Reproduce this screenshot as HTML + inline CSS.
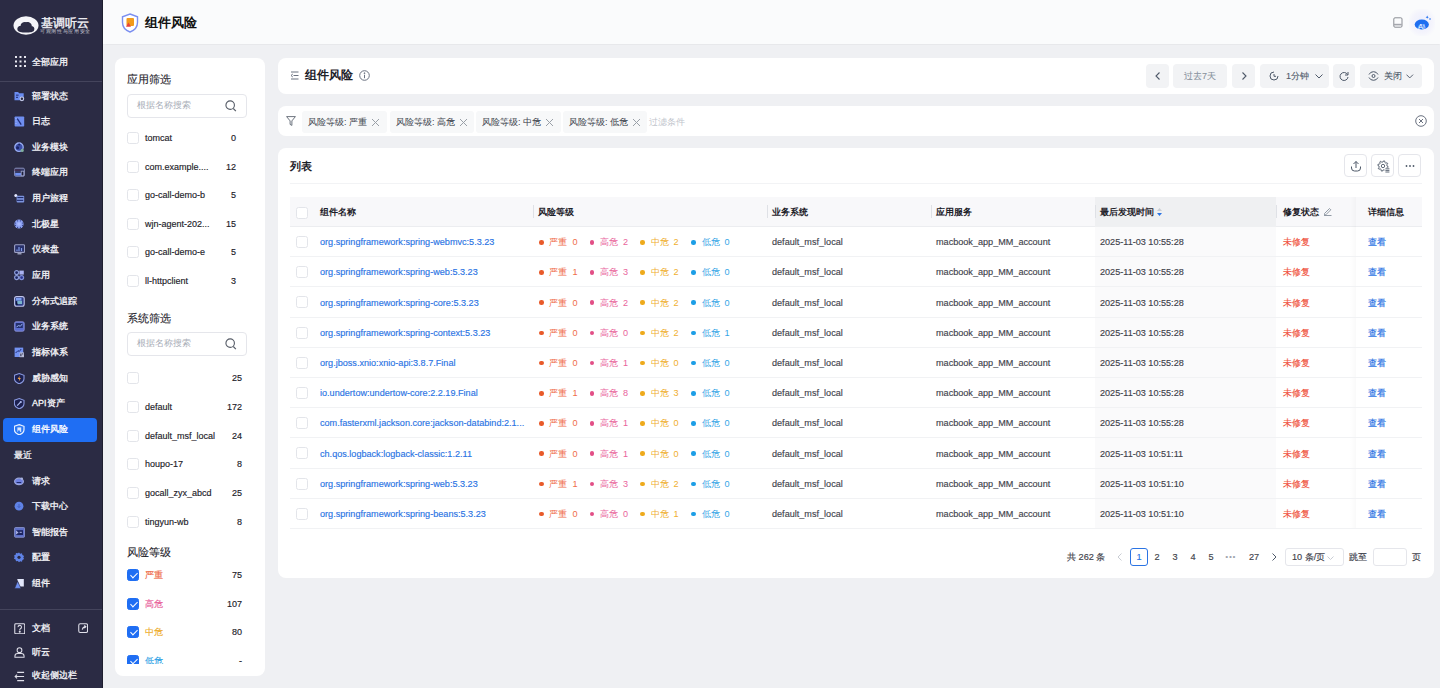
<!DOCTYPE html>
<html><head><meta charset="utf-8">
<style>
*{box-sizing:border-box;margin:0;padding:0}
html,body{width:1440px;height:688px;overflow:hidden;background:#eff0f3;font-family:"Liberation Sans",sans-serif;color:#1d2129}
.abs{position:absolute}
#side{position:absolute;left:0;top:0;width:103px;height:688px;background:#2b2b44;border-right:1px solid #1e1e2e}
.si{position:absolute;left:0;width:102px;height:24px;color:#f6f6fa;font-size:9px;line-height:24px;-webkit-text-stroke:0.3px currentColor}
.si .t{position:absolute;left:32px;top:0.5px}
.si .ic{position:absolute;left:13px;top:6px}
#hdr{position:absolute;left:103px;top:0;width:1337px;height:44px;background:#fafbfc;box-shadow:0 0.5px 1px rgba(0,0,0,0.03)}
.card{position:absolute;background:#fff;border-radius:8px}
.cb{position:absolute;width:12px;height:12px;border:1px solid #e3e5ea;border-radius:2.5px;background:#fff}
.cb.on{background:#1f6ef3;border-color:#1f6ef3}
.cb.on::after{content:"";position:absolute;left:3.5px;top:1px;width:3px;height:6px;border:solid #fff;border-width:0 1.5px 1.5px 0;transform:rotate(45deg)}
.fi{position:absolute;left:12px;width:126px;height:20px;font-size:9px;line-height:20px;color:#1d2129;-webkit-text-stroke:0.15px currentColor}
.fi .cb{left:0;top:4px}
.fi .fn{position:absolute;left:18px;top:0}
.fi .fc{position:absolute;right:3px;top:0}
.ft{position:absolute;left:12px;font-size:10.5px;line-height:14px;color:#1d2129;-webkit-text-stroke:0.1px currentColor}
.sb{position:absolute;left:12px;width:120px;height:23.5px;border:1px solid #e5e6eb;border-radius:4px;font-size:9px;line-height:21px;color:#a9aeb8;padding-left:9px}
.sb svg{position:absolute;right:9px;top:4.5px}
.btn{position:absolute;top:6px;height:24px;background:#f2f3f5;border-radius:4px;font-size:9px;-webkit-text-stroke:0.1px currentColor;line-height:24px;color:#4e5969;text-align:center}
.tag{position:absolute;top:4.5px;height:22px;background:#f7f8f9;border-radius:3px;font-size:9px;line-height:22px;color:#454a53;-webkit-text-stroke:0.05px currentColor;padding-left:6px}
.tag b{position:absolute;left:70px;top:8px;width:7px;height:7px;background:linear-gradient(45deg,transparent 45%,#9aa0a8 46%,#9aa0a8 54%,transparent 55%),linear-gradient(-45deg,transparent 45%,#9aa0a8 46%,#9aa0a8 54%,transparent 55%)}
.ob{position:absolute;top:6px;width:23px;height:23px;border:1px solid #e5e6eb;border-radius:4px;background:#fff}
.ob svg{position:absolute;left:5px;top:5px}
.th{position:absolute;top:0;font-size:9px;line-height:30px;font-weight:bold;color:#1d2129}
.sep{position:absolute;top:8px;width:1px;height:13px;background:#dfe1e6}
.tr{position:absolute;left:0;width:1144px;height:30.2px}
.tr::after{content:"";position:absolute;left:12px;right:0;bottom:0;height:1px;background:#f1f2f4}
.td{position:absolute;top:0.2px;font-size:9.1px;line-height:30px;color:#3f434c;white-space:nowrap;-webkit-text-stroke:0.15px currentColor}
.lk{color:#2b74e4}
.dot{position:absolute;top:13px;width:4.5px;height:4.5px;border-radius:50%}
.pg{position:absolute;top:0;height:18px;font-size:9.2px;line-height:18px;color:#3f434c;text-align:center;-webkit-text-stroke:0.15px currentColor}
</style></head>
<body>
<div id="side">
<div class="abs" style="left:13px;top:16px;width:26px;height:19px;">
<svg width="26" height="19" viewBox="0 0 26 19"><ellipse cx="13" cy="9.5" rx="12.5" ry="9.2" fill="#f4f4f8"/><path d="M4.6 14.2 C3.8 11.5 5.5 9.8 7.5 10 C7.6 7.2 10.5 5.6 13 6.2 C15.5 5.2 19 7.2 18.8 10.2 C21 10.2 22 12.6 21 14.4 C20.5 16 17 16.5 13 16.5 C8.5 16.5 5.2 16 4.6 14.2Z" fill="#2b2b44"/></svg>
</div>
<div class="abs" style="left:40.5px;top:16px;font-size:12px;line-height:14px;color:#f0f0f5;font-weight:normal;letter-spacing:0px;-webkit-text-stroke:0.4px currentColor">基调听云</div>
<div class="abs" style="left:40px;top:29px;width:50px;height:6px;overflow:hidden"><div style="font-size:10px;line-height:10px;color:#c8c8d4;transform:scale(0.54);transform-origin:0 0;white-space:nowrap;letter-spacing:0.5px">可观测性与应用安全</div></div>

<div class="si" style="top:49px"><svg class="ic" style="left:15px;top:7px" width="11" height="11" viewBox="0 0 11 11" fill="#e8e8f0"><rect x="0" y="0" width="2" height="2"/><rect x="4.5" y="0" width="2" height="2"/><rect x="9" y="0" width="2" height="2"/><rect x="0" y="4.5" width="2" height="2"/><rect x="4.5" y="4.5" width="2" height="2"/><rect x="9" y="4.5" width="2" height="2"/><rect x="0" y="9" width="2" height="2"/><rect x="4.5" y="9" width="2" height="2"/><rect x="9" y="9" width="2" height="2"/></svg><span class="t">全部应用</span></div>
<div class="abs" style="left:0;top:81px;width:102px;height:1px;background:#44445c"></div>

<div class="si" style="top:83px"><svg class="ic" style="left:14px;top:8px" width="11" height="11" viewBox="0 0 11 11"><path d="M0.5 1h3.6l1 1.2h4.6v7H0.5z" fill="#6a8cf0"/><rect x="2" y="3.6" width="2.6" height="1.1" fill="#26307a"/><rect x="2" y="5.8" width="2" height="1.1" fill="#26307a"/><circle cx="7.9" cy="7.8" r="1.8" fill="#2b2b44" stroke="#c4c9e6" stroke-width="1.1"/></svg><span class="t">部署状态</span></div>
<div class="si" style="top:108px"><svg class="ic" style="left:14px;top:8px" width="11" height="11" viewBox="0 0 11 11"><rect x="0.6" y="0.4" width="9.6" height="10.2" rx="0.8" fill="#6f8ef0"/><path d="M3.2 2.5L7.2 8.6" stroke="#1f2c78" stroke-width="1.3"/><path d="M1.5 2.5h1M1.5 5h1M1.5 7.5h1" stroke="#b8c6f8" stroke-width="0.8"/></svg><span class="t">日志</span></div>
<div class="si" style="top:134px"><svg class="ic" style="left:14px;top:8px" width="11" height="11" viewBox="0 0 11 11"><circle cx="5" cy="5.2" r="4.2" fill="#3c4ea8" stroke="#9aaef4" stroke-width="1.3"/><circle cx="3.6" cy="5.8" r="1.5" fill="#1a2466"/><circle cx="5.2" cy="2.6" r="1" fill="#1a2466"/><circle cx="8.2" cy="8.4" r="1.6" fill="#7fae9e"/></svg><span class="t">业务模块</span></div>
<div class="si" style="top:159px"><svg class="ic" style="left:14px;top:8px" width="11" height="11" viewBox="0 0 11 11"><rect x="0.6" y="1.2" width="9.8" height="8" rx="1.2" fill="#333a66" stroke="#8a90bc" stroke-width="1"/><rect x="1.2" y="6" width="5.8" height="2.6" fill="#6f8ff0"/><rect x="7.2" y="4.2" width="2.6" height="4.6" fill="#1c1e3a" stroke="#a0a6cc" stroke-width="0.8"/><rect x="0.3" y="2.6" width="6.2" height="1" fill="#4a2440"/></svg><span class="t">终端应用</span></div>
<div class="si" style="top:185px"><svg class="ic" style="left:14px;top:8px" width="11" height="11" viewBox="0 0 11 11"><circle cx="1.8" cy="2.4" r="1.5" fill="#e4e8ff"/><rect x="2.6" y="2.8" width="7.6" height="6.8" rx="1" fill="#7c93dc"/><rect x="3.4" y="4" width="6" height="1.1" fill="#1e2a6a"/><rect x="2.8" y="6.8" width="6.4" height="1.1" fill="#1e2a6a"/></svg><span class="t">用户旅程</span></div>
<div class="si" style="top:211px"><svg class="ic" style="left:14px;top:8px" width="11" height="11" viewBox="0 0 11 11"><circle cx="5" cy="5" r="4.6" fill="#8ea2f2"/><g fill="#2a3886"><circle cx="3.6" cy="1.8" r="0.6"/><circle cx="6.4" cy="1.8" r="0.6"/><circle cx="1.5" cy="4" r="0.6"/><circle cx="8.5" cy="4" r="0.6"/><circle cx="1.5" cy="6.3" r="0.6"/><circle cx="8.5" cy="6.3" r="0.6"/><circle cx="3.6" cy="8.3" r="0.6"/><circle cx="6.4" cy="8.3" r="0.6"/></g><circle cx="5" cy="5" r="1.8" fill="#a8b8ff"/></svg><span class="t">北极星</span></div>
<div class="si" style="top:236px"><svg class="ic" style="left:14px;top:8px" width="11" height="11" viewBox="0 0 11 11"><rect x="0.6" y="0.8" width="10" height="7.6" rx="1" fill="#28306a" stroke="#9ca0c4" stroke-width="1.1"/><path d="M3 7V5.5M5 7V3M7.5 7V4" stroke="#7f9ae8" stroke-width="1.2"/><rect x="3.5" y="9.2" width="4" height="1.2" fill="#b4b8d4"/></svg><span class="t">仪表盘</span></div>
<div class="si" style="top:262px"><svg class="ic" style="left:14px;top:8px" width="11" height="11" viewBox="0 0 11 11"><circle cx="2.6" cy="2.6" r="2" fill="#1c2460" stroke="#8c9cd8" stroke-width="1.2"/><rect x="5.4" y="0.6" width="4.4" height="4" fill="#aab2f2"/><circle cx="2.6" cy="7.6" r="2" fill="#1c2460" stroke="#8c9cd8" stroke-width="1.2"/><circle cx="7.6" cy="7.6" r="2" fill="#2c3490" stroke="#7f8fd8" stroke-width="1.2"/></svg><span class="t">应用</span></div>
<div class="si" style="top:288px"><svg class="ic" style="left:14px;top:8px" width="11" height="11" viewBox="0 0 11 11"><rect x="0.6" y="0.6" width="9.6" height="9.6" rx="2" fill="#30408a" stroke="#c0c4ea" stroke-width="1.1"/><rect x="2" y="2" width="5.5" height="2.6" fill="#7f9ff0"/><rect x="3.4" y="4.8" width="4.6" height="3.2" fill="#7ab4cc"/><path d="M2.2 5v3.4h1.4" stroke="#121a44" stroke-width="1"/></svg><span class="t">分布式追踪</span></div>
<div class="si" style="top:313px"><svg class="ic" style="left:14px;top:8px" width="11" height="11" viewBox="0 0 11 11"><rect x="0.6" y="0.8" width="9.6" height="9.4" rx="1.5" fill="#5a6cd0" stroke="#8a90d4" stroke-width="0.9"/><rect x="1.8" y="2" width="7" height="5" fill="#24306e"/><path d="M2.4 6L4.6 4.6 6.4 5.2 8.4 2.8" stroke="#a4bcfa" stroke-width="0.9" fill="none"/></svg><span class="t">业务系统</span></div>
<div class="si" style="top:339px"><svg class="ic" style="left:14px;top:8px" width="11" height="11" viewBox="0 0 11 11"><rect x="0.6" y="0.6" width="8.6" height="9.4" fill="#7392f2"/><path d="M1.6 6L4 3.6 5.2 4.6 7.2 2" stroke="#22307a" stroke-width="1" fill="none"/><rect x="5.6" y="5.4" width="4.4" height="4.8" fill="#b8bcd8"/><rect x="6.4" y="6.6" width="1" height="2.6" fill="#1e2446"/><rect x="8.2" y="6.4" width="1" height="1" fill="#1e2446"/></svg><span class="t">指标体系</span></div>
<div class="si" style="top:365px"><svg class="ic" style="left:14px;top:8px" width="11" height="11" viewBox="0 0 11 11"><path d="M5.2 0.6L10 2.3V5.6C10 8.3 7.8 10 5.2 10.8 2.6 10 0.4 8.3 0.4 5.6V2.3Z" fill="#1c2050" stroke="#8a9ae0" stroke-width="1.1"/><path d="M5.8 2.8L3.6 5.9h1.6L4.8 8.4 6.9 5.1H5.4z" fill="#f0a040"/></svg><span class="t">威胁感知</span></div>
<div class="si" style="top:390px"><svg class="ic" style="left:14px;top:8px" width="11" height="11" viewBox="0 0 11 11"><path d="M5.2 0.6L10 2.3V5.6C10 8.3 7.8 10 5.2 10.8 2.6 10 0.4 8.3 0.4 5.6V2.3Z" fill="#1c2050" stroke="#8a9ae0" stroke-width="1.1"/><path d="M3.2 7.6L6.6 4.2" stroke="#b0bcf0" stroke-width="1.2"/><circle cx="6.8" cy="4" r="1.1" fill="#b0bcf0"/></svg><span class="t">API资产</span></div>
<div class="abs" style="left:3px;top:418px;width:94px;height:24px;background:#1f6ef3;border-radius:4px"></div>
<div class="si" style="top:416px;color:#fff"><svg class="ic" style="left:14px;top:8px" width="11" height="11" viewBox="0 0 11 11"><path d="M5.2 0.6L10 2.3V5.6C10 8.3 7.8 10 5.2 10.8 2.6 10 0.4 8.3 0.4 5.6V2.3Z" fill="#2a78f5" stroke="#eaf1ff" stroke-width="1.2"/><path d="M3.4 3.4h3.8v4.6H3.4z" fill="#d8e6ff"/><path d="M3.4 8l1.6-2.2L6.4 8z" fill="#2a78f5"/></svg><span class="t">组件风险</span></div>

<div class="si" style="top:442px;color:#ececf2"><span class="t" style="left:14px">最近</span></div>
<div class="si" style="top:468px"><svg class="ic" style="left:14px;top:8px" width="11" height="11" viewBox="0 0 11 11"><ellipse cx="5" cy="5.4" rx="4.4" ry="3.2" fill="#6f80e0" stroke="#9aa4d8" stroke-width="1.2"/><rect x="2.6" y="6" width="4.6" height="1" fill="#1e2a6a"/><circle cx="7.8" cy="2.6" r="1.2" fill="#aab4e0"/></svg><span class="t">请求</span></div>
<div class="si" style="top:493px"><svg class="ic" style="left:14px;top:8px" width="11" height="11" viewBox="0 0 11 11"><circle cx="5" cy="5.2" r="4.4" fill="#5f82e6"/><path d="M5 3v3.4M3.6 5.2L5 6.6 6.4 5.2" stroke="#3a58b8" stroke-width="0.8" fill="none"/></svg><span class="t">下载中心</span></div>
<div class="si" style="top:519px"><svg class="ic" style="left:14px;top:8px" width="11" height="11" viewBox="0 0 11 11"><rect x="0.6" y="0.6" width="10" height="9.6" rx="0.8" fill="#5c6ec8" stroke="#8c96d0" stroke-width="0.9"/><rect x="2" y="3.2" width="7" height="4.8" fill="#1c2460"/><path d="M2.6 7.2V4.6L4.2 6.2" stroke="#aab2e4" stroke-width="1.1" fill="none"/><rect x="5.6" y="4.8" width="2.2" height="1" fill="#aab2e4"/></svg><span class="t">智能报告</span></div>
<div class="si" style="top:544px"><svg class="ic" style="left:14px;top:8px" width="11" height="11" viewBox="0 0 11 11"><path d="M5 0.4l1.2 1.3 1.8-0.4 0.4 1.8 1.7 0.8-0.8 1.6 0.8 1.6-1.7 0.8-0.4 1.8-1.8-0.4L5 10.2 3.8 8.9 2 9.3 1.6 7.5 -0.1 6.7 0.7 5.1 -0.1 3.5 1.6 2.7 2 0.9 3.8 1.3z" fill="#5f82e6"/><circle cx="5" cy="5.3" r="1.6" fill="#2b2b44"/></svg><span class="t">配置</span></div>
<div class="si" style="top:570px"><svg class="ic" style="left:14px;top:8px" width="11" height="11" viewBox="0 0 11 11"><path d="M3.2 1h6.6v7.6H5.6z" fill="#e2e7fb"/><path d="M0.6 10.4L3.6 3.2 7 10.4z" fill="#6f8ff0" stroke="#2b2b44" stroke-width="0.6"/></svg><span class="t">组件</span></div>

<div class="abs" style="left:0;top:609px;width:102px;height:1px;background:#44445c"></div>
<div class="si" style="top:615px"><svg class="ic" style="left:13.5px;top:7.5px" width="11.5" height="11.5" viewBox="0 0 12 12" fill="none" stroke="#e0e0ea" stroke-width="1.1"><rect x="0.8" y="0.8" width="10.4" height="10.4" rx="1"/><path d="M4.2 4.3a1.8 1.8 0 1 1 2.5 1.6c-0.6 0.3-0.7 0.7-0.7 1.4"/><circle cx="6" cy="9" r="0.5" fill="#e0e0ea"/></svg><span class="t">文档</span><svg class="ic" style="left:77.5px;top:8px" width="10.5" height="10.5" viewBox="0 0 11 11" fill="none" stroke="#e0e0ea" stroke-width="1.1"><rect x="0.8" y="0.8" width="9.2" height="9.2" rx="1.5"/><path d="M4.5 7C4.8 5 6 4 8 4M6.6 2.6L8.2 4 6.6 5.4" stroke-width="1.2"/></svg></div>
<div class="si" style="top:639px"><svg class="ic" style="left:14px;top:7.5px" width="11" height="11" viewBox="0 0 12 12" fill="none" stroke="#e0e0ea" stroke-width="1.1"><circle cx="6" cy="3.5" r="2.6"/><path d="M1 11.2v-1a3 3 0 0 1 3-3h4a3 3 0 0 1 3 3v1z"/></svg><span class="t">听云</span></div>
<div class="si" style="top:662px"><svg class="ic" style="left:14px;top:9px" width="11" height="11" viewBox="0 0 12 12" fill="none" stroke="#e0e0ea" stroke-width="1.1"><path d="M3.5 1.5h7.5M1.2 6h9.8M3.5 10.5h7.5M3.4 3.9L1.2 6l2.2 2.1"/></svg><span class="t">收起侧边栏</span></div>
</div>

<div id="hdr">
 <svg class="abs" style="left:18px;top:13px" width="18" height="20" viewBox="0 0 18 20"><path d="M9 1 L16.5 3.8 V9.5 C16.5 14.5 13 17.5 9 19 C5 17.5 1.5 14.5 1.5 9.5 V3.8Z" fill="#fff" stroke="#7b8ff0" stroke-width="1.4"/><rect x="5.5" y="5" width="7.5" height="8" rx="1" fill="#f29a1c"/><path d="M5 13.8 L7.5 9.5 L10 13.8Z" fill="#e8423c"/></svg>
 <div class="abs" style="left:42px;top:15px;font-size:13.2px;line-height:16px;font-weight:bold;color:#111">组件风险</div>
 <svg class="abs" style="left:1290px;top:17px" width="10" height="11" viewBox="0 0 10 11" fill="none" stroke="#8a8d94" stroke-width="1"><rect x="0.8" y="0.8" width="8.2" height="9.4" rx="1.2"/><path d="M1 7.6h7.8" stroke="#a4a7ad" stroke-width="1.6"/></svg>
 <div class="abs" style="left:1306px;top:9px;width:26px;height:27px;background:radial-gradient(ellipse at center,#eceefe 0%,#f4f4fc 55%,rgba(247,248,250,0) 80%)"></div>
 <svg class="abs" style="left:1311px;top:14px" width="17" height="17" viewBox="0 0 17 17"><ellipse cx="7.8" cy="10.5" rx="7.1" ry="5.1" fill="#1f6ff0"/><path d="M4 14.6C4.6 12.2 6 10.6 7.8 10.6S11 12.2 11.6 14.6" stroke="#5fa0ff" stroke-width="1.2" fill="none"/><text x="4.2" y="14.6" font-size="7.2" font-family="Liberation Sans" fill="#ffffff">Ai</text><path d="M13.2 1.6l0.5 1.1 1.1 0.5-1.1 0.5-0.5 1.1-0.5-1.1-1.1-0.5 1.1-0.5z" fill="#1f6ff0"/><circle cx="16" cy="5" r="0.8" fill="#1f6ff0"/></svg>
</div>

<div class="card" style="left:115px;top:58px;width:150px;height:618px">
 <div class="ft" style="top:14px">应用筛选</div>
 <div class="sb" style="top:36px">根据名称搜索<svg width="12" height="12" viewBox="0 0 13 13" fill="none" stroke="#555b66" stroke-width="1.2"><circle cx="5.6" cy="5.6" r="4.6"/><path d="M9 9.2l2.8 2.8"/></svg></div>
 <div class="fi" style="top:70.0px"><i class="cb"></i><span class="fn">tomcat</span><span class="fc" style="right:17px">0</span></div>
<div class="fi" style="top:98.6px"><i class="cb"></i><span class="fn">com.example....</span><span class="fc" style="right:17px">12</span></div>
<div class="fi" style="top:127.2px"><i class="cb"></i><span class="fn">go-call-demo-b</span><span class="fc" style="right:17px">5</span></div>
<div class="fi" style="top:155.8px"><i class="cb"></i><span class="fn">wjn-agent-202...</span><span class="fc" style="right:17px">15</span></div>
<div class="fi" style="top:184.4px"><i class="cb"></i><span class="fn">go-call-demo-e</span><span class="fc" style="right:17px">5</span></div>
<div class="fi" style="top:213.0px"><i class="cb"></i><span class="fn">ll-httpclient</span><span class="fc" style="right:17px">3</span></div>
</div>
<div class="abs" style="left:115px;top:58px;width:150px;height:606px;overflow:hidden">
 <div class="ft" style="top:253px">系统筛选</div>
 <div class="sb" style="top:274px">根据名称搜索<svg width="12" height="12" viewBox="0 0 13 13" fill="none" stroke="#555b66" stroke-width="1.2"><circle cx="5.6" cy="5.6" r="4.6"/><path d="M9 9.2l2.8 2.8"/></svg></div>
 <div class="fi" style="top:310.0px"><i class="cb"></i><span class="fn"></span><span class="fc" style="right:11px">25</span></div>
<div class="fi" style="top:338.8px"><i class="cb"></i><span class="fn">default</span><span class="fc" style="right:11px">172</span></div>
<div class="fi" style="top:367.6px"><i class="cb"></i><span class="fn">default_msf_local</span><span class="fc" style="right:11px">24</span></div>
<div class="fi" style="top:396.4px"><i class="cb"></i><span class="fn">houpo-17</span><span class="fc" style="right:11px">8</span></div>
<div class="fi" style="top:425.2px"><i class="cb"></i><span class="fn">gocall_zyx_abcd</span><span class="fc" style="right:11px">25</span></div>
<div class="fi" style="top:454.0px"><i class="cb"></i><span class="fn">tingyun-wb</span><span class="fc" style="right:11px">8</span></div>
 <div class="ft" style="top:487px">风险等级</div>
 <div class="fi" style="top:507.0px"><i class="cb on"></i><span class="fn" style="color:#ee6a45">严重</span><span class="fc" style="right:11px">75</span></div>
<div class="fi" style="top:535.7px"><i class="cb on"></i><span class="fn" style="color:#e8609a">高危</span><span class="fc" style="right:11px">107</span></div>
<div class="fi" style="top:564.4px"><i class="cb on"></i><span class="fn" style="color:#eeac2a">中危</span><span class="fc" style="right:11px">80</span></div>
<div class="fi" style="top:593.1px"><i class="cb on"></i><span class="fn" style="color:#2ca2e6">低危</span><span class="fc" style="right:11px">-</span></div>
</div>

<div class="card" style="left:278px;top:58px;width:1156px;height:36px">
 <svg class="abs" style="left:12px;top:13px" width="9" height="9" viewBox="0 0 9 9" fill="none" stroke="#6b7280" stroke-width="1"><path d="M1 1h7.5M3.5 4.5h5M1 8h7.5M2.8 3L1 4.5 2.8 6"/></svg>
 <div class="abs" style="left:27px;top:8px;font-size:12px;line-height:18px;font-weight:bold;color:#1d2129">组件风险</div>
 <svg class="abs" style="left:81px;top:12px" width="11" height="11" viewBox="0 0 11 11" fill="none" stroke="#6b7280" stroke-width="1"><circle cx="5.5" cy="5.5" r="4.8"/><path d="M5.5 4.8v3.4"/><circle cx="5.5" cy="3.2" r="0.45" fill="#6b7280"/></svg>
 <div class="btn" style="left:868px;width:23px"><svg style="margin-top:8px" width="6" height="8" viewBox="0 0 6 8" fill="none" stroke="#4e5969" stroke-width="1.1"><path d="M4.5 0.5L1 4l3.5 3.5"/></svg></div>
 <div class="btn" style="left:895px;width:54px;color:#86909c">过去7天</div>
 <div class="btn" style="left:954px;width:23px"><svg style="margin-top:8px" width="6" height="8" viewBox="0 0 6 8" fill="none" stroke="#4e5969" stroke-width="1.1"><path d="M1.5 0.5L5 4 1.5 7.5"/></svg></div>
 <div class="btn" style="left:982px;width:69px;text-align:left;padding-left:26px">1分钟<svg class="abs" style="left:9px;top:7px" width="10" height="10" viewBox="0 0 10 10" fill="none" stroke="#4e5969" stroke-width="1"><path d="M9 5A4 4 0 1 1 5 1"/><path d="M5 3v2.3h2"/></svg><svg class="abs" style="left:55px;top:10px" width="8" height="5" viewBox="0 0 8 5" fill="none" stroke="#4e5969" stroke-width="1"><path d="M0.5 0.5L4 4 7.5 0.5"/></svg></div>
 <div class="btn" style="left:1055px;width:22px"><svg class="abs" style="left:6px;top:7px" width="10" height="10" viewBox="0 0 10 10" fill="none" stroke="#4e5969" stroke-width="1"><path d="M8.5 3.5A4 4 0 1 0 9 6"/><path d="M9 1v3H6"/></svg></div>
 <div class="btn" style="left:1082px;width:62px;text-align:left;padding-left:24px">关闭<svg class="abs" style="left:8px;top:7px" width="11" height="10" viewBox="0 0 11 10" fill="none" stroke="#4e5969" stroke-width="1"><path d="M1 3.5A5 5 0 0 1 10 3.5"/><path d="M1 6.5A5 5 0 0 0 10 6.5"/><circle cx="5.5" cy="5" r="1.5"/></svg><svg class="abs" style="left:46px;top:10px" width="7.5" height="5" viewBox="0 0 8 5" fill="none" stroke="#4e5969" stroke-width="1"><path d="M0.5 0.5L4 4 7.5 0.5"/></svg></div>
</div>

<div class="card" style="left:278px;top:106px;width:1156px;height:30px">
 <svg class="abs" style="left:8px;top:10px" width="10" height="10" viewBox="0 0 10 10" fill="none" stroke="#5c6470" stroke-width="0.9" stroke-linejoin="round"><path d="M0.6 0.6h8.8L5.9 4.9V9.4L4.1 8.4V4.9z"/></svg>
 <div class="tag" style="left:24px;width:85px">风险等级: 严重<b></b></div>
 <div class="tag" style="left:112px;width:84px">风险等级: 高危<b></b></div>
 <div class="tag" style="left:198px;width:85px">风险等级: 中危<b></b></div>
 <div class="tag" style="left:285px;width:84px">风险等级: 低危<b></b></div>
 <div class="abs" style="left:371px;top:4.5px;font-size:9px;line-height:22px;color:#c0c4cc">过滤条件</div>
 <svg class="abs" style="left:1137px;top:9px" width="12" height="12" viewBox="0 0 12 12" fill="none" stroke="#6b7280" stroke-width="1"><circle cx="6" cy="6" r="5.3"/><path d="M4 4l4 4M8 4l-4 4"/></svg>
</div>

<div class="card" style="left:278px;top:148px;width:1156px;height:430px">
 <div class="abs" style="left:12px;top:11px;font-size:10.5px;line-height:14px;font-weight:bold;color:#1d2129">列表</div>
 <div class="ob" style="left:1066px"><svg width="12" height="12" viewBox="0 0 12 12" fill="none" stroke="#4e5969" stroke-width="1"><path d="M6 8V1.5M3.5 4L6 1.5 8.5 4"/><path d="M1.5 6.5V8a3 3 0 0 0 3 3h3a3 3 0 0 0 3-3V6.5"/></svg></div>
 <div class="ob" style="left:1093px"><svg width="13" height="13" viewBox="0 0 13 13" fill="none" stroke="#4e5969" stroke-width="0.9" stroke-linejoin="round"><path d="M10.00 6.00 L11.16 6.61 L10.88 7.80 L9.56 7.82 L8.83 8.83 L9.22 10.08 L8.18 10.72 L7.24 9.80 L6.00 10.00 L5.39 11.16 L4.20 10.88 L4.18 9.56 L3.17 8.83 L1.92 9.22 L1.28 8.18 L2.20 7.24 L2.00 6.00 L0.84 5.39 L1.12 4.20 L2.44 4.18 L3.17 3.17 L2.78 1.92 L3.82 1.28 L4.76 2.20 L6.00 2.00 L6.61 0.84 L7.80 1.12 L7.82 2.44 L8.83 3.17 L10.08 2.78 L10.72 3.82 L9.80 4.76Z" fill="#fff"/><circle cx="6" cy="6" r="1.7"/><path d="M8.2 8.6h4.3M8.2 10.3h4.3M8.2 12h4.3" stroke-width="1"/><rect x="7.6" y="7.8" width="5.4" height="5.2" fill="#fff" stroke="none"/><path d="M8.4 8.8h4M8.4 10.4h4M8.4 12h4" stroke-width="0.9"/></svg></div>
 <div class="ob" style="left:1120px"><svg width="12" height="12" viewBox="0 0 12 12" fill="#4e5969"><circle cx="2.5" cy="6" r="0.9"/><circle cx="6" cy="6" r="0.9"/><circle cx="9.5" cy="6" r="0.9"/></svg></div>
 <div class="abs" style="left:12px;top:35px;width:1132px;height:1px;background:#f2f3f5"></div>
 <div class="abs" style="left:12px;top:49px;width:1132px;height:400px;overflow:hidden">
  <div class="abs" style="left:0;top:0;width:1132px;height:29.5px;background:#f8f8fa;border-bottom:1px solid #ecedf0"></div>
  <div class="abs" style="left:805px;top:0;width:181px;height:29.5px;background:#eff0f2"></div>
  <i class="cb" style="left:6px;top:9.5px"></i>
  <span class="th" style="left:30px">组件名称</span>
  <i class="sep" style="left:242.5px"></i><span class="th" style="left:248px">风险等级</span>
  <i class="sep" style="left:476.5px"></i><span class="th" style="left:482px">业务系统</span>
  <i class="sep" style="left:640.5px"></i><span class="th" style="left:646px">应用服务</span>
  <i class="sep" style="left:804.5px"></i><span class="th" style="left:810px">最后发现时间<svg style="position:absolute;left:57px;top:11px" width="5" height="8" viewBox="0 0 5 8"><path d="M2.5 0L5 3H0z" fill="#c9cdd4"/><path d="M2.5 8L5 5H0z" fill="#2b74e4"/></svg></span>
  <i class="sep" style="left:985.5px"></i><span class="th" style="left:993px">修复状态<svg style="position:absolute;left:40px;top:10px" width="9" height="9" viewBox="0 0 9 9" fill="none" stroke="#86909c" stroke-width="0.9"><path d="M1 8.5h7.5M1.5 6.5L6.5 1.5l1.3 1.3-5 5H1.5z"/></svg></span>
  <span class="th" style="left:1078px">详细信息</span>
 </div>
 <div class="abs" style="left:-266px;top:-148px;width:0;height:0">
 </div>
 <div class="abs" style="left:817px;top:79px;width:181px;height:302px;background:#fafafb"></div>
 <div class="abs" style="left:1072px;top:49px;width:6px;height:332px;background:linear-gradient(90deg,rgba(0,0,0,0) 0%,rgba(0,0,0,0.025) 100%)"></div>
 <div class="abs" style="left:0;top:0;width:1144px;height:430px">
 <div class="tr" style="top:79.0px">
<i class="cb" style="left:18px;top:9px"></i>
<span class="td lk" style="left:42px">org.springframework:spring-webmvc:5.3.23</span>
<i class="dot" style="left:261px;background:#e85a2a"></i><span class="td" style="left:270.5px;color:#ef6d4a;-webkit-text-stroke:0">严重</span><span class="td" style="left:294.5px;color:#ef6d4a;-webkit-text-stroke:0">0</span>
<i class="dot" style="left:311.5px;background:#e24f86"></i><span class="td" style="left:322px;color:#e9649c;-webkit-text-stroke:0">高危</span><span class="td" style="left:345px;color:#e9649c;-webkit-text-stroke:0">2</span>
<i class="dot" style="left:362px;background:#eeaa1c"></i><span class="td" style="left:372.5px;color:#efae2e;-webkit-text-stroke:0">中危</span><span class="td" style="left:395.5px;color:#efae2e;-webkit-text-stroke:0">2</span>
<i class="dot" style="left:413px;background:#1c9ee6"></i><span class="td" style="left:423.5px;color:#35a5e6;-webkit-text-stroke:0">低危</span><span class="td" style="left:446.5px;color:#35a5e6;-webkit-text-stroke:0">0</span>
<span class="td" style="left:494px">default_msf_local</span>
<span class="td" style="left:658px">macbook_app_MM_account</span>
<span class="td" style="left:822px">2025-11-03 10:55:28</span>
<span class="td" style="left:1005px;color:#f0513c">未修复</span>
<span class="td lk" style="left:1090px">查看</span>
</div>
<div class="tr" style="top:109.2px">
<i class="cb" style="left:18px;top:9px"></i>
<span class="td lk" style="left:42px">org.springframework:spring-web:5.3.23</span>
<i class="dot" style="left:261px;background:#e85a2a"></i><span class="td" style="left:270.5px;color:#ef6d4a;-webkit-text-stroke:0">严重</span><span class="td" style="left:294.5px;color:#ef6d4a;-webkit-text-stroke:0">1</span>
<i class="dot" style="left:311.5px;background:#e24f86"></i><span class="td" style="left:322px;color:#e9649c;-webkit-text-stroke:0">高危</span><span class="td" style="left:345px;color:#e9649c;-webkit-text-stroke:0">3</span>
<i class="dot" style="left:362px;background:#eeaa1c"></i><span class="td" style="left:372.5px;color:#efae2e;-webkit-text-stroke:0">中危</span><span class="td" style="left:395.5px;color:#efae2e;-webkit-text-stroke:0">2</span>
<i class="dot" style="left:413px;background:#1c9ee6"></i><span class="td" style="left:423.5px;color:#35a5e6;-webkit-text-stroke:0">低危</span><span class="td" style="left:446.5px;color:#35a5e6;-webkit-text-stroke:0">0</span>
<span class="td" style="left:494px">default_msf_local</span>
<span class="td" style="left:658px">macbook_app_MM_account</span>
<span class="td" style="left:822px">2025-11-03 10:55:28</span>
<span class="td" style="left:1005px;color:#f0513c">未修复</span>
<span class="td lk" style="left:1090px">查看</span>
</div>
<div class="tr" style="top:139.4px">
<i class="cb" style="left:18px;top:9px"></i>
<span class="td lk" style="left:42px">org.springframework:spring-core:5.3.23</span>
<i class="dot" style="left:261px;background:#e85a2a"></i><span class="td" style="left:270.5px;color:#ef6d4a;-webkit-text-stroke:0">严重</span><span class="td" style="left:294.5px;color:#ef6d4a;-webkit-text-stroke:0">0</span>
<i class="dot" style="left:311.5px;background:#e24f86"></i><span class="td" style="left:322px;color:#e9649c;-webkit-text-stroke:0">高危</span><span class="td" style="left:345px;color:#e9649c;-webkit-text-stroke:0">2</span>
<i class="dot" style="left:362px;background:#eeaa1c"></i><span class="td" style="left:372.5px;color:#efae2e;-webkit-text-stroke:0">中危</span><span class="td" style="left:395.5px;color:#efae2e;-webkit-text-stroke:0">2</span>
<i class="dot" style="left:413px;background:#1c9ee6"></i><span class="td" style="left:423.5px;color:#35a5e6;-webkit-text-stroke:0">低危</span><span class="td" style="left:446.5px;color:#35a5e6;-webkit-text-stroke:0">0</span>
<span class="td" style="left:494px">default_msf_local</span>
<span class="td" style="left:658px">macbook_app_MM_account</span>
<span class="td" style="left:822px">2025-11-03 10:55:28</span>
<span class="td" style="left:1005px;color:#f0513c">未修复</span>
<span class="td lk" style="left:1090px">查看</span>
</div>
<div class="tr" style="top:169.6px">
<i class="cb" style="left:18px;top:9px"></i>
<span class="td lk" style="left:42px">org.springframework:spring-context:5.3.23</span>
<i class="dot" style="left:261px;background:#e85a2a"></i><span class="td" style="left:270.5px;color:#ef6d4a;-webkit-text-stroke:0">严重</span><span class="td" style="left:294.5px;color:#ef6d4a;-webkit-text-stroke:0">0</span>
<i class="dot" style="left:311.5px;background:#e24f86"></i><span class="td" style="left:322px;color:#e9649c;-webkit-text-stroke:0">高危</span><span class="td" style="left:345px;color:#e9649c;-webkit-text-stroke:0">0</span>
<i class="dot" style="left:362px;background:#eeaa1c"></i><span class="td" style="left:372.5px;color:#efae2e;-webkit-text-stroke:0">中危</span><span class="td" style="left:395.5px;color:#efae2e;-webkit-text-stroke:0">2</span>
<i class="dot" style="left:413px;background:#1c9ee6"></i><span class="td" style="left:423.5px;color:#35a5e6;-webkit-text-stroke:0">低危</span><span class="td" style="left:446.5px;color:#35a5e6;-webkit-text-stroke:0">1</span>
<span class="td" style="left:494px">default_msf_local</span>
<span class="td" style="left:658px">macbook_app_MM_account</span>
<span class="td" style="left:822px">2025-11-03 10:55:28</span>
<span class="td" style="left:1005px;color:#f0513c">未修复</span>
<span class="td lk" style="left:1090px">查看</span>
</div>
<div class="tr" style="top:199.8px">
<i class="cb" style="left:18px;top:9px"></i>
<span class="td lk" style="left:42px">org.jboss.xnio:xnio-api:3.8.7.Final</span>
<i class="dot" style="left:261px;background:#e85a2a"></i><span class="td" style="left:270.5px;color:#ef6d4a;-webkit-text-stroke:0">严重</span><span class="td" style="left:294.5px;color:#ef6d4a;-webkit-text-stroke:0">0</span>
<i class="dot" style="left:311.5px;background:#e24f86"></i><span class="td" style="left:322px;color:#e9649c;-webkit-text-stroke:0">高危</span><span class="td" style="left:345px;color:#e9649c;-webkit-text-stroke:0">1</span>
<i class="dot" style="left:362px;background:#eeaa1c"></i><span class="td" style="left:372.5px;color:#efae2e;-webkit-text-stroke:0">中危</span><span class="td" style="left:395.5px;color:#efae2e;-webkit-text-stroke:0">0</span>
<i class="dot" style="left:413px;background:#1c9ee6"></i><span class="td" style="left:423.5px;color:#35a5e6;-webkit-text-stroke:0">低危</span><span class="td" style="left:446.5px;color:#35a5e6;-webkit-text-stroke:0">0</span>
<span class="td" style="left:494px">default_msf_local</span>
<span class="td" style="left:658px">macbook_app_MM_account</span>
<span class="td" style="left:822px">2025-11-03 10:55:28</span>
<span class="td" style="left:1005px;color:#f0513c">未修复</span>
<span class="td lk" style="left:1090px">查看</span>
</div>
<div class="tr" style="top:230.0px">
<i class="cb" style="left:18px;top:9px"></i>
<span class="td lk" style="left:42px">io.undertow:undertow-core:2.2.19.Final</span>
<i class="dot" style="left:261px;background:#e85a2a"></i><span class="td" style="left:270.5px;color:#ef6d4a;-webkit-text-stroke:0">严重</span><span class="td" style="left:294.5px;color:#ef6d4a;-webkit-text-stroke:0">1</span>
<i class="dot" style="left:311.5px;background:#e24f86"></i><span class="td" style="left:322px;color:#e9649c;-webkit-text-stroke:0">高危</span><span class="td" style="left:345px;color:#e9649c;-webkit-text-stroke:0">8</span>
<i class="dot" style="left:362px;background:#eeaa1c"></i><span class="td" style="left:372.5px;color:#efae2e;-webkit-text-stroke:0">中危</span><span class="td" style="left:395.5px;color:#efae2e;-webkit-text-stroke:0">3</span>
<i class="dot" style="left:413px;background:#1c9ee6"></i><span class="td" style="left:423.5px;color:#35a5e6;-webkit-text-stroke:0">低危</span><span class="td" style="left:446.5px;color:#35a5e6;-webkit-text-stroke:0">0</span>
<span class="td" style="left:494px">default_msf_local</span>
<span class="td" style="left:658px">macbook_app_MM_account</span>
<span class="td" style="left:822px">2025-11-03 10:55:28</span>
<span class="td" style="left:1005px;color:#f0513c">未修复</span>
<span class="td lk" style="left:1090px">查看</span>
</div>
<div class="tr" style="top:260.2px">
<i class="cb" style="left:18px;top:9px"></i>
<span class="td lk" style="left:42px">com.fasterxml.jackson.core:jackson-databind:2.1...</span>
<i class="dot" style="left:261px;background:#e85a2a"></i><span class="td" style="left:270.5px;color:#ef6d4a;-webkit-text-stroke:0">严重</span><span class="td" style="left:294.5px;color:#ef6d4a;-webkit-text-stroke:0">0</span>
<i class="dot" style="left:311.5px;background:#e24f86"></i><span class="td" style="left:322px;color:#e9649c;-webkit-text-stroke:0">高危</span><span class="td" style="left:345px;color:#e9649c;-webkit-text-stroke:0">1</span>
<i class="dot" style="left:362px;background:#eeaa1c"></i><span class="td" style="left:372.5px;color:#efae2e;-webkit-text-stroke:0">中危</span><span class="td" style="left:395.5px;color:#efae2e;-webkit-text-stroke:0">0</span>
<i class="dot" style="left:413px;background:#1c9ee6"></i><span class="td" style="left:423.5px;color:#35a5e6;-webkit-text-stroke:0">低危</span><span class="td" style="left:446.5px;color:#35a5e6;-webkit-text-stroke:0">0</span>
<span class="td" style="left:494px">default_msf_local</span>
<span class="td" style="left:658px">macbook_app_MM_account</span>
<span class="td" style="left:822px">2025-11-03 10:55:28</span>
<span class="td" style="left:1005px;color:#f0513c">未修复</span>
<span class="td lk" style="left:1090px">查看</span>
</div>
<div class="tr" style="top:290.4px">
<i class="cb" style="left:18px;top:9px"></i>
<span class="td lk" style="left:42px">ch.qos.logback:logback-classic:1.2.11</span>
<i class="dot" style="left:261px;background:#e85a2a"></i><span class="td" style="left:270.5px;color:#ef6d4a;-webkit-text-stroke:0">严重</span><span class="td" style="left:294.5px;color:#ef6d4a;-webkit-text-stroke:0">0</span>
<i class="dot" style="left:311.5px;background:#e24f86"></i><span class="td" style="left:322px;color:#e9649c;-webkit-text-stroke:0">高危</span><span class="td" style="left:345px;color:#e9649c;-webkit-text-stroke:0">1</span>
<i class="dot" style="left:362px;background:#eeaa1c"></i><span class="td" style="left:372.5px;color:#efae2e;-webkit-text-stroke:0">中危</span><span class="td" style="left:395.5px;color:#efae2e;-webkit-text-stroke:0">0</span>
<i class="dot" style="left:413px;background:#1c9ee6"></i><span class="td" style="left:423.5px;color:#35a5e6;-webkit-text-stroke:0">低危</span><span class="td" style="left:446.5px;color:#35a5e6;-webkit-text-stroke:0">0</span>
<span class="td" style="left:494px">default_msf_local</span>
<span class="td" style="left:658px">macbook_app_MM_account</span>
<span class="td" style="left:822px">2025-11-03 10:51:11</span>
<span class="td" style="left:1005px;color:#f0513c">未修复</span>
<span class="td lk" style="left:1090px">查看</span>
</div>
<div class="tr" style="top:320.6px">
<i class="cb" style="left:18px;top:9px"></i>
<span class="td lk" style="left:42px">org.springframework:spring-web:5.3.23</span>
<i class="dot" style="left:261px;background:#e85a2a"></i><span class="td" style="left:270.5px;color:#ef6d4a;-webkit-text-stroke:0">严重</span><span class="td" style="left:294.5px;color:#ef6d4a;-webkit-text-stroke:0">1</span>
<i class="dot" style="left:311.5px;background:#e24f86"></i><span class="td" style="left:322px;color:#e9649c;-webkit-text-stroke:0">高危</span><span class="td" style="left:345px;color:#e9649c;-webkit-text-stroke:0">3</span>
<i class="dot" style="left:362px;background:#eeaa1c"></i><span class="td" style="left:372.5px;color:#efae2e;-webkit-text-stroke:0">中危</span><span class="td" style="left:395.5px;color:#efae2e;-webkit-text-stroke:0">2</span>
<i class="dot" style="left:413px;background:#1c9ee6"></i><span class="td" style="left:423.5px;color:#35a5e6;-webkit-text-stroke:0">低危</span><span class="td" style="left:446.5px;color:#35a5e6;-webkit-text-stroke:0">0</span>
<span class="td" style="left:494px">default_msf_local</span>
<span class="td" style="left:658px">macbook_app_MM_account</span>
<span class="td" style="left:822px">2025-11-03 10:51:10</span>
<span class="td" style="left:1005px;color:#f0513c">未修复</span>
<span class="td lk" style="left:1090px">查看</span>
</div>
<div class="tr" style="top:350.8px">
<i class="cb" style="left:18px;top:9px"></i>
<span class="td lk" style="left:42px">org.springframework:spring-beans:5.3.23</span>
<i class="dot" style="left:261px;background:#e85a2a"></i><span class="td" style="left:270.5px;color:#ef6d4a;-webkit-text-stroke:0">严重</span><span class="td" style="left:294.5px;color:#ef6d4a;-webkit-text-stroke:0">0</span>
<i class="dot" style="left:311.5px;background:#e24f86"></i><span class="td" style="left:322px;color:#e9649c;-webkit-text-stroke:0">高危</span><span class="td" style="left:345px;color:#e9649c;-webkit-text-stroke:0">0</span>
<i class="dot" style="left:362px;background:#eeaa1c"></i><span class="td" style="left:372.5px;color:#efae2e;-webkit-text-stroke:0">中危</span><span class="td" style="left:395.5px;color:#efae2e;-webkit-text-stroke:0">1</span>
<i class="dot" style="left:413px;background:#1c9ee6"></i><span class="td" style="left:423.5px;color:#35a5e6;-webkit-text-stroke:0">低危</span><span class="td" style="left:446.5px;color:#35a5e6;-webkit-text-stroke:0">0</span>
<span class="td" style="left:494px">default_msf_local</span>
<span class="td" style="left:658px">macbook_app_MM_account</span>
<span class="td" style="left:822px">2025-11-03 10:51:10</span>
<span class="td" style="left:1005px;color:#f0513c">未修复</span>
<span class="td lk" style="left:1090px">查看</span>
</div>
 </div>
 <div class="abs" style="left:0;top:400px;width:1156px;height:18px">
  <span class="pg" style="left:789px">共 262 条</span>
  <svg class="abs" style="left:839px;top:5px" width="6" height="8" viewBox="0 0 6 8" fill="none" stroke="#c9cdd4" stroke-width="1"><path d="M4.5 0.5L1 4l3.5 3.5"/></svg>
  <span class="pg" style="left:852px;width:18px;border:1px solid #2b74e4;border-radius:3px;color:#2b74e4;line-height:16px">1</span>
  <span class="pg" style="left:874px;width:10px">2</span>
  <span class="pg" style="left:892px;width:10px">3</span>
  <span class="pg" style="left:910px;width:10px">4</span>
  <span class="pg" style="left:928px;width:10px">5</span>
  <span class="pg" style="left:946px;width:14px;color:#9aa0aa;font-size:7px;letter-spacing:1.2px">•••</span>
  <span class="pg" style="left:969px;width:14px">27</span>
  <svg class="abs" style="left:993px;top:5px" width="6" height="8" viewBox="0 0 6 8" fill="none" stroke="#4e5969" stroke-width="1"><path d="M1.5 0.5L5 4 1.5 7.5"/></svg>
  <span class="pg" style="left:1007px;width:59px;border:1px solid #e5e6eb;border-radius:3px;text-align:left;padding-left:6px;line-height:16px">10 条/页<svg class="abs" style="left:41px;top:6.5px" width="7" height="4" viewBox="0 0 7 4" fill="none" stroke="#c9cdd4" stroke-width="1"><path d="M0.5 0.5L3.5 3.5 6.5 0.5"/></svg></span>
  <span class="pg" style="left:1071px">跳至</span>
  <span class="pg" style="left:1095px;width:34px;border:1px solid #e5e6eb;border-radius:3px"></span>
  <span class="pg" style="left:1134px">页</span>
 </div>
</div>
</body></html>
